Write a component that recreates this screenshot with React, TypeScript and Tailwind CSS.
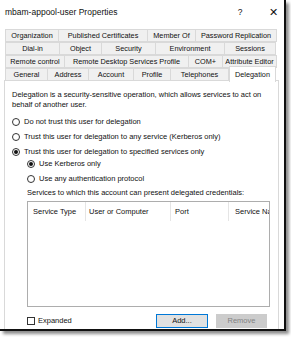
import React from "react";

type Tab = { label: string; w: number };

const tabRows: Tab[][] = [
  [
    { label: "Organization", w: 54 },
    { label: "Published Certificates", w: 90 },
    { label: "Member Of", w: 49 },
    { label: "Password Replication", w: 82 },
  ],
  [
    { label: "Dial-in", w: 55 },
    { label: "Object", w: 43 },
    { label: "Security", w: 55 },
    { label: "Environment", w: 70 },
    { label: "Sessions", w: 52 },
  ],
  [
    { label: "Remote control", w: 60 },
    { label: "Remote Desktop Services Profile", w: 125 },
    { label: "COM+", w: 35 },
    { label: "Attribute Editor", w: 55 },
  ],
  [
    { label: "General", w: 43 },
    { label: "Address", w: 42 },
    { label: "Account", w: 46 },
    { label: "Profile", w: 38 },
    { label: "Telephones", w: 59 },
    { label: "Delegation", w: 47 },
  ],
];

const Radio = ({ checked, label }: { checked?: boolean; label: string }) => (
  <div className="flex items-center h-[15px]">
    <span className="w-[8px] h-[8px] rounded-full border border-[#333] bg-white flex items-center justify-center">
      {checked && <span className="w-[4px] h-[4px] rounded-full bg-[#111]" />}
    </span>
    <span className="ml-[4px]">{label}</span>
  </div>
);

export default function App() {
  return (
    <div
      className="w-[291px] h-[337px] bg-white relative overflow-hidden text-[#111] text-[7.5px] leading-[10px]"
      style={{ fontFamily: '"Liberation Sans", Arial, sans-serif' }}
    >
      <div className="w-[286px] h-[331px] bg-white border-r-2 border-b-2 border-[#111] shadow-[3px_3px_3px_rgba(0,0,0,0.45)] flex flex-col overflow-hidden">
        {/* title bar */}
        <div className="h-[29px] shrink-0 flex items-start pt-[7px] pl-[5px] pr-[6px] text-[8.5px]">
          <span className="flex-1">mbam-appool-user Properties</span>
          <span className="w-[10px] text-center mr-[24px]">?</span>
          <span className="text-[11px] leading-[10px] font-light">✕</span>
        </div>

        {/* tabs */}
        <div className="pl-[5px] shrink-0 text-[7.3px]">
          {tabRows.map((row, i) => (
            <div key={i} className="flex h-[13px]">
              {row.map((t) => {
                const active = t.label === "Delegation";
                return (
                  <div
                    key={t.label}
                    style={{ width: t.w }}
                    className={
                      active
                        ? "bg-white border border-b-0 border-[#d9d9d9] -mt-[2px] h-[16px] flex items-center justify-center z-10 whitespace-nowrap"
                        : "bg-[#f0f0f0] border border-[#d9d9d9] -ml-px first:ml-0 flex items-center justify-center whitespace-nowrap"
                    }
                  >
                    {t.label}
                  </div>
                );
              })}
            </div>
          ))}
        </div>

        {/* delegation panel */}
        <div className="ml-[4px] mr-[5px] -mt-px shrink-0 h-[260px] border border-[#d9d9d9] bg-white pl-[7px] pt-[9px]">
          <p className="w-[262px]">
            Delegation is a security-sensitive operation, which allows services to act on behalf of another user.
          </p>
          <div className="mt-[4px]">
            <Radio label="Do not trust this user for delegation" />
            <Radio label="Trust this user for delegation to any service (Kerberos only)" />
            <Radio checked label="Trust this user for delegation to specified services only" />
          </div>
          <div className="pl-[15px] -mt-[3px]">
            <Radio checked label="Use Kerberos only" />
            <Radio label="Use any authentication protocol" />
            <p className="mt-[2px]">Services to which this account can present delegated credentials:</p>

            <div className="mt-[3px] w-[243px] h-[106px] border border-[#adadad] bg-white overflow-hidden">
              <div className="flex h-[19px] items-center whitespace-nowrap">
                <div className="w-[58px] h-full shrink-0 flex items-center pl-[5px] border-r border-[#e5e5e5]">Service Type</div>
                <div className="w-[85px] h-full shrink-0 flex items-center pl-[3px] border-r border-[#e5e5e5]">User or Computer</div>
                <div className="w-[58px] h-full shrink-0 flex items-center pl-[4px] border-r border-[#e5e5e5]">Port</div>
                <div className="flex-1 min-w-0 h-full flex items-center pl-[6px] overflow-hidden">Service Name</div>
              </div>
            </div>

            <div className="flex items-center mt-[7px]">
              <span className="w-[8px] h-[8px] border border-[#333] bg-white" />
              <span className="ml-[3px]">Expanded</span>
              <div className="ml-auto mr-[11px] flex gap-[8px]">
                <button className="w-[52px] h-[14px] border border-[#0078d7] bg-[#e1e1e1] text-[7.5px] leading-[10px]">
                  Add...
                </button>
                <button className="w-[51px] h-[14px] border border-[#cccccc] bg-[#cccccc] text-[#838383] text-[7.5px] leading-[10px]">
                  Remove
                </button>
              </div>
            </div>
          </div>
        </div>
      </div>
    </div>
  );
}
